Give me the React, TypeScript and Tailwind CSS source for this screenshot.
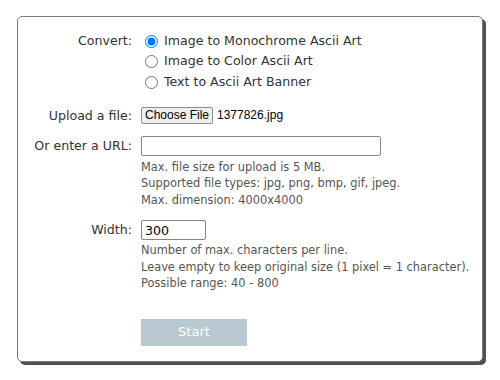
import { useState } from "react";

const font = { fontFamily: '"DejaVu Sans", Verdana, sans-serif' };
const arial = { fontFamily: '"Liberation Sans", Arial, sans-serif' };

export default function App() {
    const [mode, setMode] = useState("mono");
    const [url, setUrl] = useState("");
    const [width, setWidth] = useState("300");

    const options = [
        { id: "mono", label: "Image to Monochrome Ascii Art" },
        { id: "color", label: "Image to Color Ascii Art" },
        { id: "banner", label: "Text to Ascii Art Banner" },
    ];

    return (
        <div className="w-[500px] h-[380px] bg-white pt-[16px] pl-[17px]" style={font}>
            <div className="w-[466px] h-[346px] rounded-[5px] border border-[#7a7a7a] bg-white shadow-[3px_3px_0_#4f4f4f] text-[12.6px] text-[#333]">
                <div className="grid grid-cols-[114px_1fr] gap-x-[9px] pt-[14px]">
                    <div className="text-right leading-[20.5px]">Convert:</div>
                    <div className="flex flex-col">
                        {options.map((o) => (
                            <label key={o.id} className="flex items-center h-[20.5px] gap-[6px] cursor-pointer">
                                <input
                                    type="radio"
                                    name="mode"
                                    className="m-0 ml-[4px] w-[13px] h-[13px] accent-[#0075ff]"
                                    checked={mode === o.id}
                                    onChange={() => setMode(o.id)}
                                />
                                <span>{o.label}</span>
                            </label>
                        ))}
                    </div>

                    <div className="text-right mt-[14px] leading-[17px]">Upload a file:</div>
                    <div className="mt-[14px] flex items-center gap-[4px] h-[17px]">
                        <button
                            type="button"
                            className="h-[17px] w-[72px] rounded-[2px] border border-[#8f8f8f] bg-[#efefef] text-[12px] leading-none text-black"
                            style={arial}
                        >
                            Choose File
                        </button>
                        <span className="text-[12px] text-black" style={arial}>
                            1377826.jpg
                        </span>
                    </div>

                    <div className="text-right mt-[12px] leading-[20px]">Or enter a URL:</div>
                    <div className="mt-[12px]">
                        <input
                            type="text"
                            value={url}
                            onChange={(e) => setUrl(e.target.value)}
                            className="block h-[20px] w-[240px] rounded-[2px] border border-[#858585] px-[3px] outline-none"
                        />
                        <div className="mt-[3px] text-[11.4px] text-[#555] leading-[16.5px] whitespace-nowrap">
                            <div>Max. file size for upload is 5 MB.</div>
                            <div>Supported file types: jpg, png, bmp, gif, jpeg.</div>
                            <div>Max. dimension: 4000x4000</div>
                        </div>
                    </div>

                    <div className="text-right mt-[12px] leading-[20px]">Width:</div>
                    <div className="mt-[12px]">
                        <input
                            type="text"
                            value={width}
                            onChange={(e) => setWidth(e.target.value)}
                            className="block h-[20px] w-[65px] rounded-[2px] border border-[#858585] px-[3px] outline-none text-black"
                        />
                        <div className="mt-[2px] text-[11.4px] text-[#555] leading-[16.5px] whitespace-nowrap">
                            <div>Number of max. characters per line.</div>
                            <div>Leave empty to keep original size (1 pixel = 1 character).</div>
                            <div>Possible range: 40 - 800</div>
                        </div>
                        <button
                            type="button"
                            className="mt-[27px] h-[27px] w-[106px] bg-[#b8c9d1] text-[13px] text-white"
                        >
                            Start
                        </button>
                    </div>
                </div>
            </div>
        </div>
    );
}
